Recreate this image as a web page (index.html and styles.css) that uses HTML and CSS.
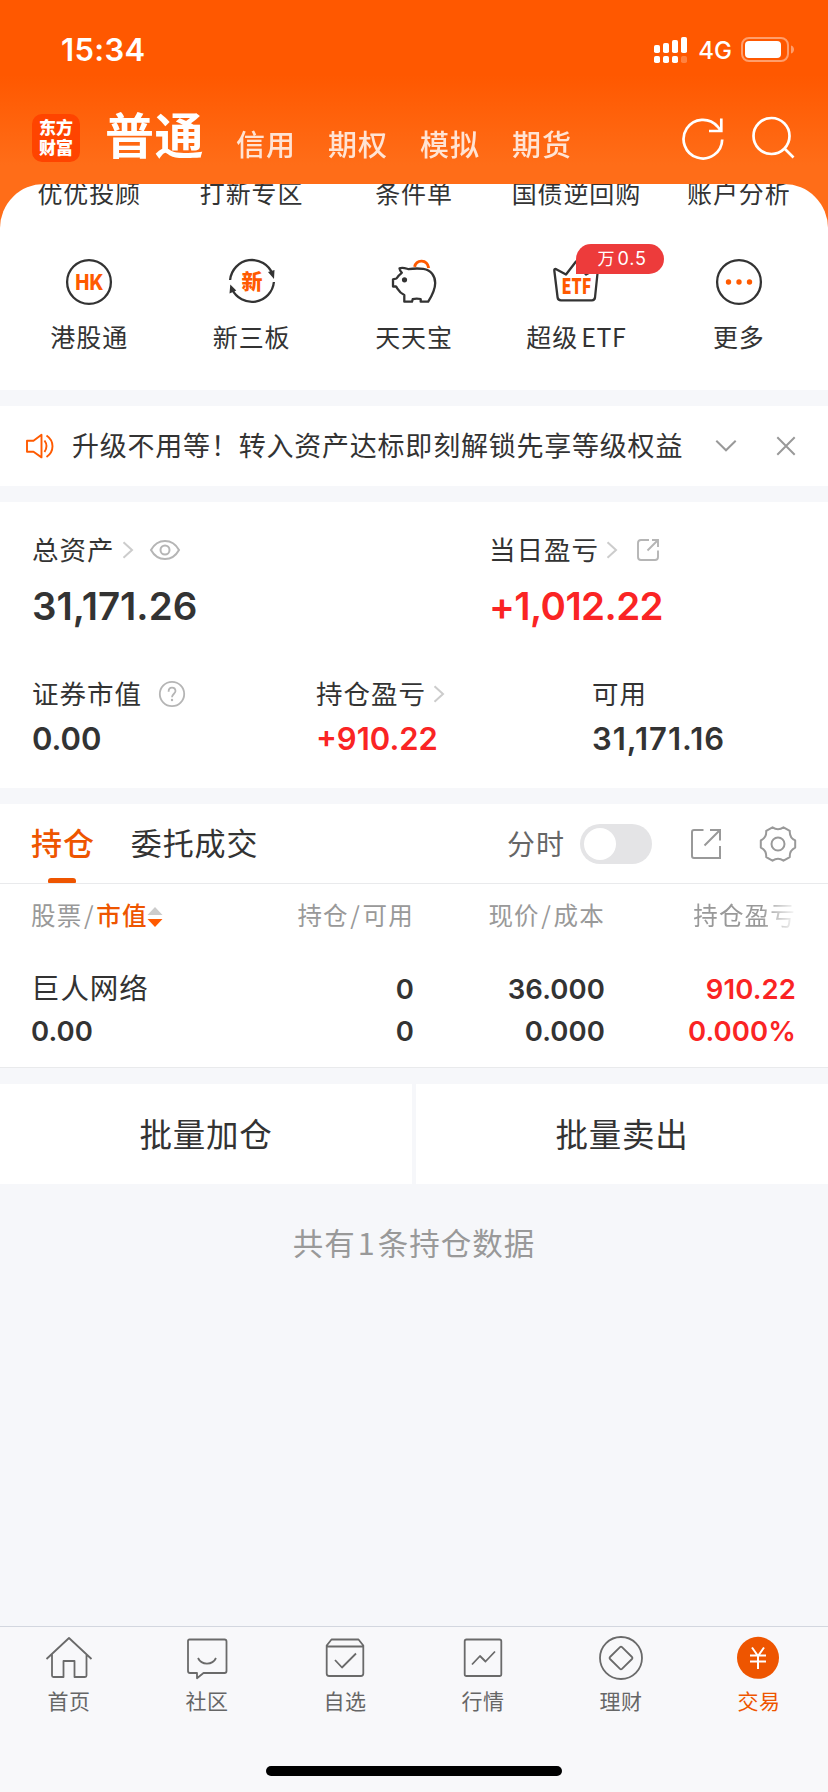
FILE: index.html
```html
<!DOCTYPE html>
<html lang="zh-CN">
<head>
<meta charset="utf-8">
<title>交易</title>
<link rel="stylesheet" href="styles.css">
</head>
<body>
<div class="app">
  <header class="header">
    <div class="status">
      <span class="time">15:34</span>
      <svg class="signal" width="33" height="26" viewBox="0 0 33 26" fill="#fff">
        <rect x="0" y="8" width="6" height="8" rx="1.8"/><rect x="9" y="6" width="6" height="10" rx="1.8"/>
        <rect x="18" y="3" width="6" height="13" rx="1.8"/><rect x="27" y="0" width="6" height="16" rx="1.8"/>
        <rect x="0" y="19" width="6" height="7" rx="1.8"/><rect x="9" y="19" width="6" height="7" rx="1.8"/>
        <rect x="18" y="19" width="6" height="7" rx="1.8"/><rect x="27" y="19" width="6" height="7" rx="1.8" opacity=".25"/>
      </svg>
      <span class="net">4G</span>
      <svg class="battery" width="53" height="25" viewBox="0 0 53 25">
        <rect x="1" y="1" width="46" height="23" rx="7" fill="none" stroke="#fff" stroke-opacity=".42" stroke-width="2"/>
        <rect x="4" y="4" width="36" height="17" rx="4" fill="#fff"/>
        <path d="M50 8.5c4 1 4 7 0 8z" fill="#fff" fill-opacity=".42"/>
      </svg>
    </div>
    <nav class="nav">
      <div class="logo"><span>东方</span><span>财富</span></div>
      <span class="nav-on">普通</span>
      <span class="nav-item">信用</span><span class="nav-item">期权</span><span class="nav-item">模拟</span><span class="nav-item">期货</span>
      <svg class="refresh" width="44" height="44" viewBox="0 0 44 44" fill="none" stroke="#fff" stroke-width="2.7">
        <path d="M41.2 23.5A19.3 19.3 0 1 1 36.5 10.5L39.8 14.5M40.3 2.5V15H28"/>
      </svg>
      <svg class="search" width="44" height="44" viewBox="0 0 44 44" fill="none" stroke="#fff" stroke-width="2.7">
        <circle cx="20.5" cy="20" r="18"/><path d="M33 32l9.5 9.5"/>
      </svg>
    </nav>
  </header>

  <div class="quick-back">
    <section class="quick">
      <div class="quick-row cut">
        <span>优优投顾</span><span>打新专区</span><span>条件单</span><span>国债逆回购</span><span>账户分析</span>
      </div>
      <div class="quick-row">
        <div class="entry">
          <svg width="48" height="48" viewBox="0 0 48 48"><circle cx="24" cy="24" r="21.9" fill="none" stroke="#333" stroke-width="2.3"/>
            <text class="hk" x="24.3" y="31.5" text-anchor="middle" textLength="28" lengthAdjust="spacingAndGlyphs">HK</text></svg>
          <span>港股通</span>
        </div>
        <div class="entry">
          <svg width="48" height="48" viewBox="0 0 48 48"><g fill="none" stroke="#333" stroke-width="2.3"><path d="M2.1 22A22 22 0 0 1 44.5 16"/><path d="M45.9 24A22 22 0 0 1 4 31"/></g>
            <path d="M40 14l6.500-2-.5 9zM1.500 35.500l.8-9 6 6z" fill="#333"/>
            <text class="xin" x="24" y="31.300" text-anchor="middle">新</text></svg>
          <span>新三板</span>
        </div>
        <div class="entry">
          <svg width="48" height="48" viewBox="0 0 48 48"><g fill="none" stroke-width="2.3" stroke="#333" stroke-linejoin="round"><path d="M9.500 10.300C13 9 16 10.500 18.500 11.200C26 10 30 10.500 33.300 10.900C41 12 45.200 18 45.200 25C45.200 30 43 36 38.200 43.700H30.700V41Q26 40 22.700 41.200L22 43.700H14.300V37C9 34.500 8 31 6 28.500H3V21.300L6.500 20.500C8 18 9.500 16.500 11.800 14.800Q9.800 12.500 9.500 10.300Z"/></g>
            <circle cx="14.500" cy="21.800" r="2.600" fill="#333"/><path d="M24.600 8.800C26.500 1.200 37 .8 38.700 10" fill="none" stroke="#ff5a00" stroke-width="2.900"/></svg>
          <span>天天宝</span>
        </div>
        <div class="entry">
          <svg width="48" height="48" viewBox="0 0 48 48"><path d="M2.300 12.500Q2 10.500 4.200 11.200L14 16.500L24 3.500L34 16.500L44 11.200Q46.200 10.500 45.800 12.500L43 39.500Q42.600 42.300 40 42.300H9Q6 42.300 5.600 39.500Z" fill="none" stroke="#333" stroke-width="2.300" stroke-linejoin="round"/>
            <text class="etf" x="24.500" y="36" text-anchor="middle" textLength="30" lengthAdjust="spacingAndGlyphs">ETF</text></svg>
          <span class="mixed">超级<i>ETF</i></span>
          <b class="badge">万<i>0.5</i></b>
        </div>
        <div class="entry">
          <svg width="48" height="48" viewBox="0 0 48 48"><circle cx="24" cy="24" r="21.900" fill="none" stroke="#333" stroke-width="2.300"/><g fill="#ff5a00"><circle cx="13.500" cy="24" r="2.700"/><circle cx="24" cy="24" r="2.700"/><circle cx="34.500" cy="24" r="2.700"/></g></svg>
          <span>更多</span>
        </div>
      </div>
    </section>
  </div>

  <section class="notice">
    <svg width="30" height="28" viewBox="0 0 30 28" fill="none" stroke="#ff5a00" stroke-width="1.900" stroke-linejoin="round"><path d="M2 8.700H8.500L16.500 2.800V25.400L8.500 19.800H2Z"/><path d="M19.500 8.500Q23.500 14 19.500 20M21.500 3.500C29.500 9 29.500 19.500 21.500 25"/></svg>
    <span class="notice-text">升级不用等！转入资产达标即刻解锁先享等级权益</span>
    <svg class="down" width="22" height="14" viewBox="0 0 22 14" fill="none" stroke="#999" stroke-width="2"><path d="M1.300 1.800L11 11.300L20.700 1.800"/></svg>
    <svg class="close" width="20" height="20" viewBox="0 0 20 20" fill="none" stroke="#999" stroke-width="2"><path d="M1.300 1.300L18.700 18.700M18.700 1.300L1.300 18.700"/></svg>
  </section>

  <section class="assets">
    <div class="pair">
      <div class="stat">
        <div class="label">总资产<svg class="chev" width="12" height="18" viewBox="0 0 12 18"><path d="M1.500 1.200L10 9L1.500 16.800"/></svg>
          <svg class="eye" width="32" height="22" viewBox="0 0 32 22" fill="none" stroke="#b5b5b5" stroke-width="2"><path d="M2 11Q7 2 16 2T30 11Q25 20 16 20T2 11Z"/><circle cx="16" cy="11" r="4.500"/></svg></div>
        <div class="big">31,171.26</div>
      </div>
      <div class="stat">
        <div class="label">当日盈亏<svg class="chev" width="12" height="18" viewBox="0 0 12 18"><path d="M1.500 1.200L10 9L1.500 16.800"/></svg>
          <svg class="share" width="24" height="24" viewBox="0 0 24 24" fill="none" stroke="#b5b5b5" stroke-width="1.900"><path d="M13 2H5Q2 2 2 5V19Q2 22 5 22H19Q22 22 22 19V12.500M16 2H22V9M22 2L11.500 12.500"/></svg></div>
        <div class="big tight up">+1,012.22</div>
      </div>
    </div>
    <div class="triple">
      <div class="stat">
        <div class="label">证券市值<svg class="help" width="28" height="28" viewBox="0 0 28 28"><circle cx="14" cy="14" r="12.200" fill="none" stroke="#b5b5b5" stroke-width="1.800"/><path d="M10.600 11.700Q10.600 7.600 14 7.600T17.500 11.100C17.500 13.600 14 14 14 17.300" fill="none" stroke="#b5b5b5" stroke-width="1.800"/><circle cx="14" cy="20" r="1.200" fill="#b5b5b5"/></svg></div>
        <div class="mid">0.00</div>
      </div>
      <div class="stat">
        <div class="label">持仓盈亏<svg class="chev" width="12" height="18" viewBox="0 0 12 18"><path d="M1.500 1.200L10 9L1.500 16.800"/></svg></div>
        <div class="mid up">+910.22</div>
      </div>
      <div class="stat">
        <div class="label">可用</div>
        <div class="mid loose">31,171.16</div>
      </div>
    </div>
  </section>

  <section class="holdings">
    <div class="tabs">
      <span class="tab on">持仓</span>
      <span class="tab">委托成交</span>
      <span class="switch-label">分时</span>
      <span class="switch"></span>
      <svg class="export" width="32" height="32" viewBox="0 0 32 32" fill="none" stroke="#999" stroke-width="2"><path d="M13.500 2H4Q2 2 2 4V28Q2 30 4 30H30V18M20 2H30V12.500M30 2L14.500 17.500"/></svg>
      <svg class="gear" width="38" height="38" viewBox="-19 -19 38 38" fill="none" stroke="#999" stroke-width="2" stroke-linejoin="round"><path d="M17.200 3.600Q11.300 6.500 11.800 13.100L5.500 16.700Q0 13 -5.500 16.700L-11.800 13.100Q-11.300 6.500 -17.200 3.600V-3.600Q-11.300 -6.500 -11.800 -13.100L-5.500 -16.700Q0 -13 5.500 -16.700L11.800 -13.100Q11.300 -6.500 17.200 -3.600Z"/><circle r="6.500"/></svg>
    </div>
    <div class="grid head">
      <span>股票<i>/</i><em>市值</em><svg width="16" height="22" viewBox="0 0 16 22"><path d="M8 1L15.500 9H.5Z" fill="#ccc"/><path d="M8 21L15.500 13H.5Z" fill="#ff5a00"/></svg></span>
      <span>持仓<i>/</i>可用</span><span>现价<i>/</i>成本</span><span class="fade">持仓盈亏</span>
    </div>
    <div class="grid row first"><span class="stock">巨人网络</span><span>0</span><span>36.000</span><span class="up">910.22</span></div>
    <div class="grid row"><span>0.00</span><span>0</span><span>0.000</span><span class="up">0.000%</span></div>
  </section>

  <section class="actions"><span>批量加仓</span><span>批量卖出</span></section>
  <p class="count">共有<i>1</i>条持仓数据</p>

  <footer class="bottom">
    <div class="bar">
      <div class="item"><svg width="48" height="48" viewBox="0 0 48 48"><path d="M1.500 25L24 4L46.500 25M7 20.500V41.500Q7 43 8.500 43H18.500V27H29.500V43H40Q41.500 43 41.500 41.500V20.500"/></svg><span>首页</span></div>
      <div class="item"><svg width="48" height="48" viewBox="0 0 48 48"><path d="M6.500 5.500H41.500Q43.500 5.500 43.500 7.500V37Q43.500 39 41.500 39H20.500L14 44.200V39H7Q5 39 5 37V7Q5 5.500 6.500 5.500ZM15 24C18.500 31.500 29.500 31.500 33 24"/></svg><span>社区</span></div>
      <div class="item"><svg width="48" height="48" viewBox="0 0 48 48"><path d="M10.500 5.500H37.500L42.300 11.500V39.500Q42.300 42 39.800 42H8.200Q5.700 42 5.700 39.500V11.500ZM5.700 12.500H42.300M14 26L21 33.500L35 19.500"/></svg><span>自选</span></div>
      <div class="item"><svg width="48" height="48" viewBox="0 0 48 48"><path d="M7.500 5.500H40.500Q42.300 5.500 42.300 7.300V40.200Q42.300 42 40.500 42H7.500Q5.700 42 5.700 40.200V7.300Q5.700 5.500 7.500 5.500ZM13 30.500L21 22L26.500 27.500L36 17.500"/></svg><span>行情</span></div>
      <div class="item"><svg width="48" height="48" viewBox="0 0 48 48"><circle cx="24" cy="24" r="21"/><path d="M23 13.200Q24 12.200 25 13.200L35 23Q36 24 35 25L25 34.800Q24 35.800 23 34.800L13 25Q12 24 13 23Z"/></svg><span>理财</span></div>
      <div class="item on"><svg width="48" height="48" viewBox="0 0 48 48"><circle cx="23" cy="23.800" r="21" class="disc"/><path class="yen" d="M17 13.500L23 22L29 13.500M15 21.500H31M15 27.500H31M23 22V35"/></svg><span>交易</span></div>
    </div>
    <div class="home"></div>
  </footer>
</div>
</body>
</html>
```

FILE: styles.css
```css
* { box-sizing: border-box; }
body { margin: 0; font-family: "Noto Sans CJK SC", sans-serif; color: #333; background: #f7f8fa; }
i, em, b { font-style: normal; font-weight: inherit; }
svg { display: block; flex: none; }
.app { width: 828px; height: 1792px; display: flex; flex-direction: column; overflow: hidden; background: #f6f7fa; }

.header { height: 184px; flex: none; background: linear-gradient(#ff5800 0, #ff5800 75px, #ff6d18 165px, #ff6d18 184px); color: #fff; }
.status { height: 99px; display: flex; align-items: center; padding: 0 34px 0 61px; }
.time { font: 600 31px/40px Inter, sans-serif; letter-spacing: .3px; margin-right: auto; }
.net { font: 500 24px/30px Inter, sans-serif; margin: 3px 9px 0 11px; }
.signal { margin-top: 1px; }
.nav { height: 78px; display: flex; align-items: center; padding: 0 33px 0 32px; }
.logo { width: 48px; height: 48px; border-radius: 10px; background: #ff4400; display: flex; flex-direction: column; align-items: center; justify-content: center; font-weight: 900; font-size: 17px; line-height: 20px; padding-bottom: 2px; }
.nav-on { font-size: 49px; font-weight: 700; line-height: 60px; letter-spacing: .5px; margin: -11px 32px 0 25px; }
.nav-item { font-size: 29px; font-weight: 500; line-height: 36px; letter-spacing: 1px; width: 92px; margin-top: 9px; opacity: .82; }
.refresh { margin-left: auto; }
.search { margin-left: 26px; }

.quick-back { background: #ff6d18; flex: none; }
.quick { height: 206px; background: #fff; border-radius: 44px 44px 0 0; padding: 0 8px; }
.quick-row { display: grid; grid-template-columns: repeat(5, 1fr); text-align: center; font-size: 25px; line-height: 34px; letter-spacing: .9px; }
.cut { height: 74px; clip-path: inset(0); }
.cut span { line-height: 16px; }
.quick-row span { white-space: nowrap; }
.entry { display: flex; flex-direction: column; align-items: center; position: relative; gap: 13px; }
.entry text { fill: #ff5a00; letter-spacing: 0; }
.hk { font: 800 21px Inter, sans-serif; }
.xin { font: 900 21px "Noto Sans CJK SC", sans-serif; }
.etf { font: 900 21px "Noto Sans CJK SC", sans-serif; }
.mixed i { margin-left: 3px; font-size: 25px; line-height: 20px; letter-spacing: .6px; }
.badge { position: absolute; left: 81px; top: -14px; width: 88px; height: 30px; border-radius: 16px 16px 16px 0; background: #ed3b3b; color: #fff; font-size: 17px; line-height: 28px; letter-spacing: 0; padding-left: 4px; }
.badge i { font: 400 18px/28px Inter, sans-serif; letter-spacing: .8px; margin-left: 3px; }

.notice { height: 80px; flex: none; margin-top: 16px; background: #fff; display: flex; align-items: center; padding: 0 32px 0 25px; }
.notice-text { font-size: 27px; line-height: 36px; letter-spacing: .780px; margin: -2px auto 0 17px; white-space: nowrap; }
.close { margin-left: 39px; }

.assets { height: 286px; flex: none; margin-top: 16px; background: #fff; padding: 30px 0 0 32px; }
.pair { display: grid; grid-template-columns: 457px 1fr; height: 144px; }
.triple { display: grid; grid-template-columns: 284px 276px 1fr; }
.label { height: 36px; display: flex; align-items: center; font-size: 26.500px; line-height: 32px; letter-spacing: 1px; padding-bottom: 3px; }
.label svg { margin-top: 3px; }
.chev { fill: none; stroke: #ccc; stroke-width: 2; margin-left: 7px; }
.eye { margin-left: 15px; }
.share { margin-left: 18px; }
.help { margin-left: 16px; }
.big { font: 600 38.500px/50px Inter, sans-serif; margin-top: 13px; }
.tight { letter-spacing: -.6px; }
.mid { font: 600 31px/40px Inter, sans-serif; margin-top: 7px; }
.loose { letter-spacing: 1px; }
.up { color: #fa2424; }

.holdings { height: 264px; flex: none; margin-top: 16px; background: #fff; border-bottom: 1px solid #e9eaec; }
.tabs { height: 80px; border-bottom: 1px solid #e9eaec; display: flex; align-items: center; padding: 0 31px; }
.tab { font-size: 31px; letter-spacing: .9px; height: 79px; line-height: 76px; }
.tab.on { color: #ee5500; font-weight: 500; margin-right: 36px; display: flex; flex-direction: column; align-items: center; }
.tab.on::after { content: ""; width: 28px; height: 5px; margin: -2px 2px 0 0; border-radius: 3px 3px 1px 1px; background: #ee5500; flex: none; }
.switch-label { margin: -2px 15px 0 auto; font-size: 28px; color: #666; letter-spacing: 1px; }
.switch { width: 72px; height: 40px; border-radius: 20px; background: #e4e4e6; padding: 4px; }
.switch::after { content: ""; display: block; width: 32px; height: 32px; border-radius: 50%; background: #fff; }
.export { margin-left: 38px; }
.gear { margin-left: 37px; }
.grid { display: grid; grid-template-columns: 173px 210px 191px 191px; padding-left: 31px; text-align: right; }
.grid > :first-child { text-align: left; }
.head { font-size: 24.500px; letter-spacing: 1.200px; color: #999; line-height: 34px; padding-top: 14px; height: 84px; white-space: nowrap; }
.head > :first-child { display: flex; align-items: center; height: 34px; }
.head i { margin: 0 1.500px; }
.head em { color: #ee5500; font-weight: 500; }
.head svg { margin: 3px 0 0 -1px; }
.fade { -webkit-mask-image: linear-gradient(90deg, #000 82%, transparent 101%); mask-image: linear-gradient(90deg, #000 82%, transparent 101%); }
.row { font: 600 27.500px/42px Inter, sans-serif; letter-spacing: .1px; }
.row .stock { font: 400 28.500px/38px "Noto Sans CJK SC", sans-serif; letter-spacing: .900px; }

.actions { display: grid; grid-template-columns: 1fr 1fr; gap: 4px; margin-top: 16px; height: 100px; flex: none; }
.actions span { background: #fff; text-align: center; font-size: 32.500px; line-height: 97px; letter-spacing: .8px; }
.count { margin: 0; padding-top: 36px; text-align: center; font-size: 30.500px; line-height: 44px; letter-spacing: 1px; color: #999; }
.count i { margin: 0 2px; }

.bottom { margin-top: auto; height: 166px; flex: none; border-top: 1px solid #d3d7df; background: #f8f8fa; display: flex; flex-direction: column; align-items: center; }
.bar { width: 828px; display: grid; grid-template-columns: repeat(6, 1fr); padding-top: 7px; }
.item { display: flex; flex-direction: column; align-items: center; gap: 2px; font-size: 21px; line-height: 32px; letter-spacing: .6px; color: #666; }
.item svg { fill: none; stroke: #6a6a6a; stroke-width: 1.800; stroke-linejoin: round; }
.item.on { color: #ee5500; }
.item .disc { fill: #ee5500; stroke: none; }
.item .yen { stroke: #fff; stroke-width: 2; }
.home { width: 296px; height: 10px; border-radius: 5px; background: #000; margin-top: 50px; }
```
